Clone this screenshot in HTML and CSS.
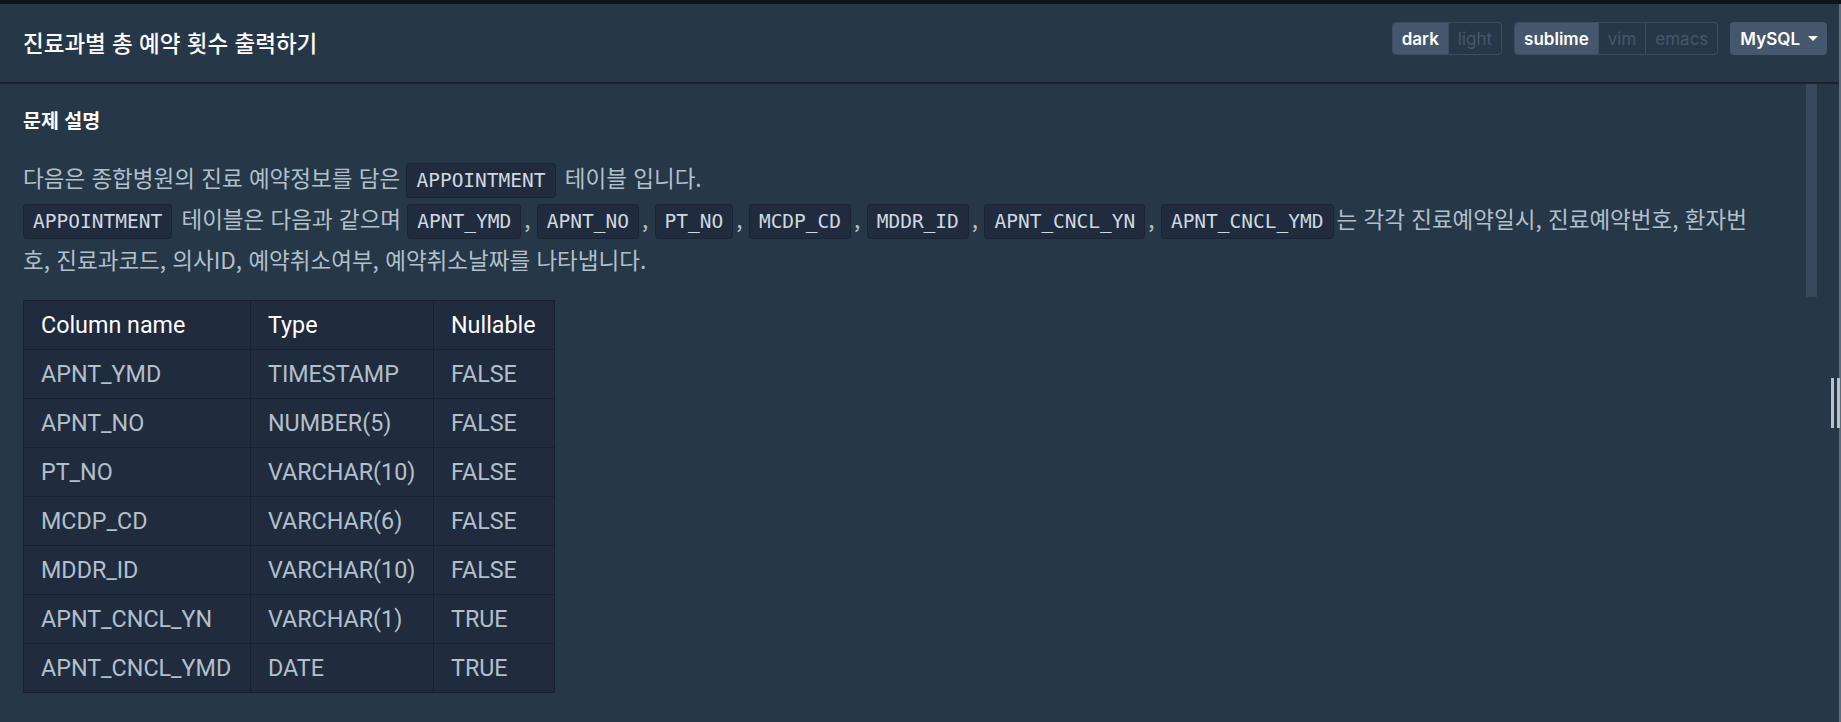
FILE: index.html
```html
<!DOCTYPE html>
<html lang="ko">
<head>
<meta charset="utf-8">
<title>진료과별 총 예약 횟수 출력하기</title>
<link rel="stylesheet" href="styles.css">
</head>
<body>
<div class="topbar"></div>
<div class="layout">
  <div class="pane">
    <header class="header">
      <h1 class="title">진료과별 총 예약 횟수 출력하기</h1>
      <div class="controls">
        <div class="seg"><span class="seg-item active">dark</span><span class="seg-item">light</span></div>
        <div class="seg"><span class="seg-item active">sublime</span><span class="seg-item">vim</span><span class="seg-item">emacs</span></div>
        <button class="dropdown">MySQL<span class="caret"></span></button>
      </div>
    </header>
    <div class="body">
      <div class="desc">
        <h2 class="heading">문제 설명</h2>
        <p class="text">다음은 종합병원의 진료 예약정보를 담은 <code>APPOINTMENT</code> 테이블 입니다.<br><code>APPOINTMENT</code> 테이블은 다음과 같으며 <code>APNT_YMD</code>, <code>APNT_NO</code>, <code>PT_NO</code>, <code>MCDP_CD</code>, <code>MDDR_ID</code>, <code>APNT_CNCL_YN</code>, <code>APNT_CNCL_YMD</code>는 각각 진료예약일시, 진료예약번호, 환자번호, 진료과코드, 의사ID, 예약취소여부, 예약취소날짜를 나타냅니다.</p>
        <table class="schema">
          <thead>
            <tr><th class="c1">Column name</th><th class="c2">Type</th><th class="c3">Nullable</th></tr>
          </thead>
          <tbody>
            <tr><td>APNT_YMD</td><td>TIMESTAMP</td><td>FALSE</td></tr>
            <tr><td>APNT_NO</td><td>NUMBER(5)</td><td>FALSE</td></tr>
            <tr><td>PT_NO</td><td>VARCHAR(10)</td><td>FALSE</td></tr>
            <tr><td>MCDP_CD</td><td>VARCHAR(6)</td><td>FALSE</td></tr>
            <tr><td>MDDR_ID</td><td>VARCHAR(10)</td><td>FALSE</td></tr>
            <tr><td>APNT_CNCL_YN</td><td>VARCHAR(1)</td><td>TRUE</td></tr>
            <tr><td>APNT_CNCL_YMD</td><td>DATE</td><td>TRUE</td></tr>
          </tbody>
        </table>
      </div>
      <div class="scrollbar"><div class="thumb"></div></div>
    </div>
  </div>
  <div class="gutter"><div class="handle"></div></div>
</div>
</body>
</html>
```
FILE: styles.css
```css
html, body {
  margin: 0;
  height: 722px;
  overflow: hidden;
}
body {
  background: #263747;
  font-family: "Noto Sans CJK KR", "Noto Sans", sans-serif;
  color: #b2c0cc;
}
.topbar {
  height: 4px;
  background: #0c151c;
}
.layout {
  display: flex;
  height: 718px;
}
.pane {
  flex: 1;
  display: flex;
  flex-direction: column;
  min-width: 0;
}
.gutter {
  width: 2px;
  background: #5f6d7b;
  position: relative;
}
.handle {
  position: absolute;
  left: -8px;
  top: 374px;
  width: 3px;
  height: 50px;
  background: #b6c3cd;
  box-shadow: 6px 0 0 #b6c3cd;
}
.header {
  height: 78px;
  border-bottom: 2px solid #1a2430;
  display: flex;
  align-items: flex-start;
  justify-content: space-between;
  padding: 0 12px 0 23px;
  box-sizing: content-box;
}
.title {
  margin: 22px 0 0;
  font-size: 22.5px;
  line-height: 33px;
  font-weight: 500;
  color: #ffffff;
}
.controls {
  display: flex;
  gap: 12px;
  margin-top: 18px;
}
.seg {
  display: flex;
  border: 1px solid #3c4d60;
  border-radius: 4px;
  overflow: hidden;
  height: 31px;
}
.seg-item {
  display: flex;
  align-items: center;
  padding: 0 9px;
  font-family: Inter, "Noto Sans", sans-serif;
  font-size: 17px;
  font-weight: 400;
  color: #46586b;
  border-left: 1px solid #3c4d60;
}
.seg-item:first-child {
  border-left: 0;
}
.seg-item.active {
  background: #44576c;
  color: #ffffff;
  font-weight: 600;
}
.dropdown {
  display: flex;
  align-items: center;
  height: 33px;
  padding: 0 9px 0 10px;
  border: 0;
  border-radius: 4px;
  background: #44576c;
  color: #ffffff;
  font-family: Inter, "Noto Sans", sans-serif;
  font-size: 17px;
  font-weight: 600;
}
.caret {
  margin-left: 8px;
  width: 0;
  height: 0;
  border-left: 5px solid transparent;
  border-right: 5px solid transparent;
  border-top: 5px solid #ffffff;
}
.body {
  flex: 1;
  display: flex;
  min-height: 0;
}
.desc {
  flex: 1;
  padding: 21px 40px 0 23px;
  min-width: 0;
}
.scrollbar {
  width: 11px;
  margin-right: 22px;
}
.thumb {
  height: 213px;
  background: #37475c;
}
.heading {
  margin: 0;
  font-size: 19.5px;
  line-height: 29px;
  font-weight: 700;
  color: #ffffff;
}
.text {
  margin: 23px 0 20px;
  font-size: 22.5px;
  line-height: 41px;
  color: #b2c0cc;
}
code {
  font-family: "DejaVu Sans Mono", "Liberation Mono", monospace;
  font-size: 19.5px;
  line-height: 1;
  padding: 5px 9px;
  margin: 0 3px 0 0;
  background: #202b3d;
  border: 1px solid #1a2434;
  border-radius: 4px;
  color: #cfd8e0;
}
.schema {
  border-collapse: collapse;
  table-layout: fixed;
  width: 531px;
  background: #202b3d;
  font-family: Roboto, "Noto Sans", sans-serif;
  font-size: 23.3px;
}
.schema th, .schema td {
  box-sizing: border-box;
  border: 1px solid #172130;
  height: 49px;
  padding: 0 17px;
  text-align: left;
  white-space: nowrap;
}
.schema th {
  color: #ffffff;
  font-weight: 400;
}
.schema td {
  color: #b2c0cc;
}
.c1 { width: 227px; }
.c2 { width: 183px; }
.c3 { width: 121px; }
```
